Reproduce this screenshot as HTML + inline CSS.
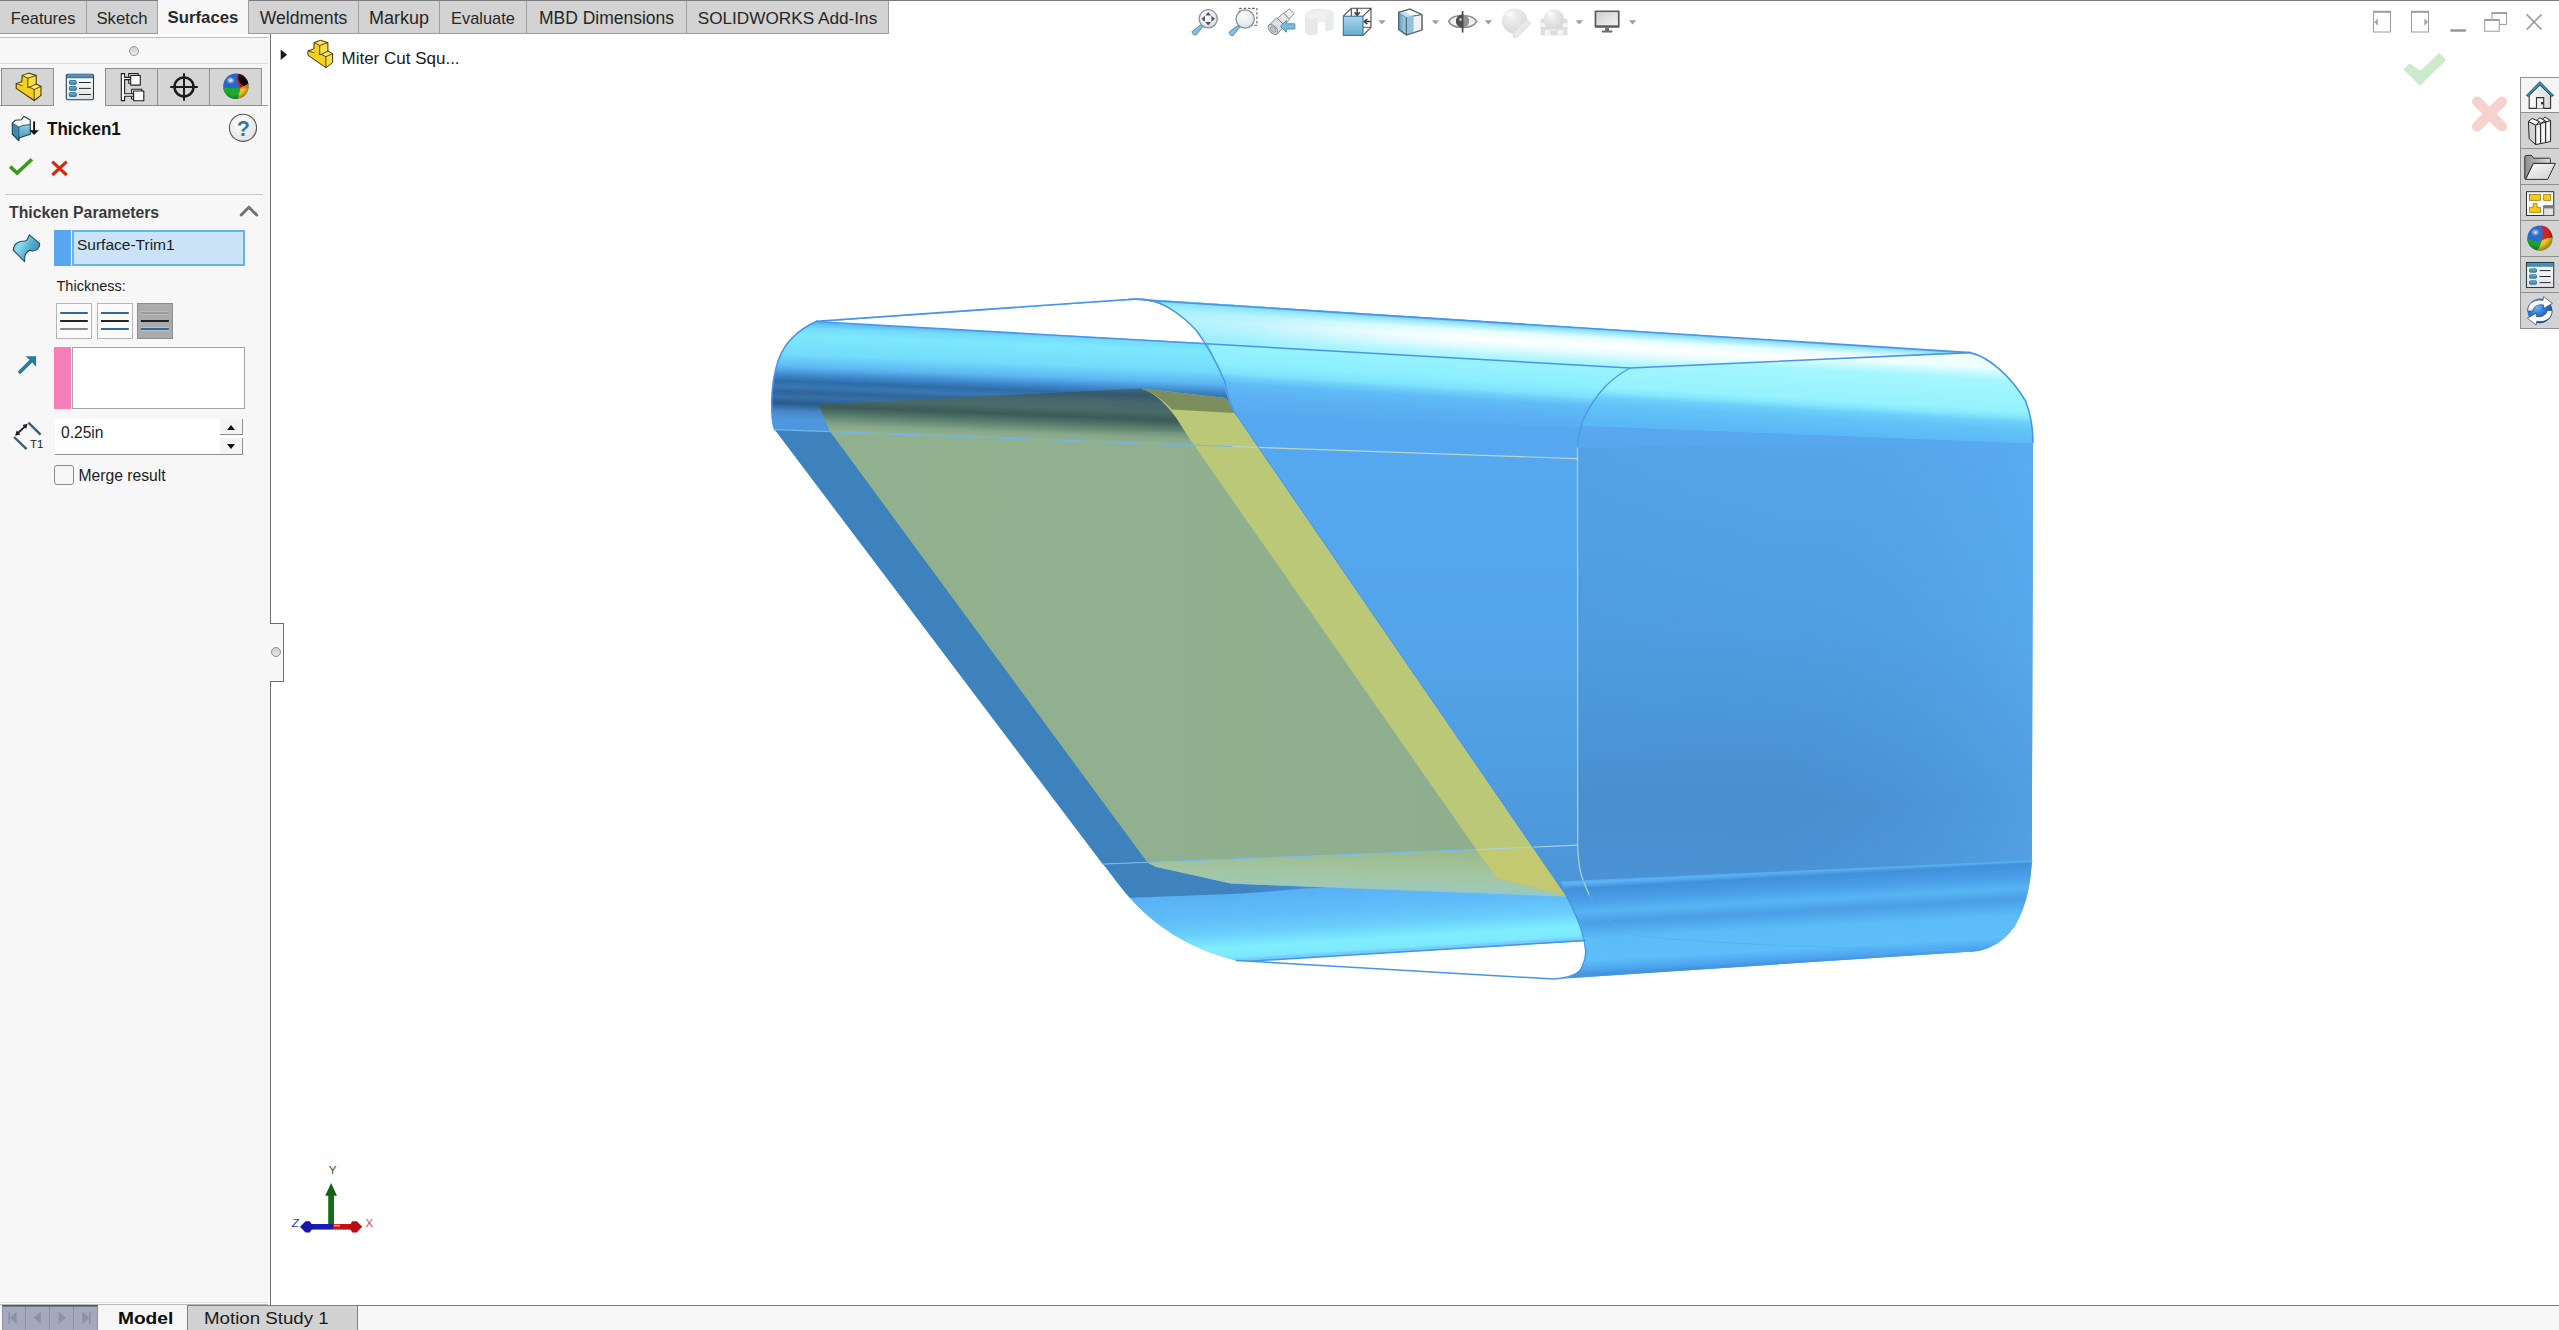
<!DOCTYPE html>
<html>
<head>
<meta charset="utf-8">
<title>SOLIDWORKS - Thicken1</title>
<style>
html,body{margin:0;padding:0;}
body{width:2559px;height:1330px;overflow:hidden;background:#fff;font-family:"Liberation Sans",sans-serif;color:#1e1e1e;position:relative;}
.abs{position:absolute;}
.t{position:absolute;white-space:pre;line-height:1;}
/* top tab strip */
#tabs{position:absolute;left:0;top:1px;height:32px;width:889px;background:#d3d3d3;border-bottom:1px solid #9b9b9b;}
#tabs .tab{position:absolute;top:0;height:32px;border-right:1px solid #9f9f9f;text-align:center;line-height:35px;color:#262626;box-sizing:border-box;}
#tabs .tab.act{background:#f7f7f7;height:34px;font-weight:bold;color:#2a2a2a;}
/* left panel */
#panel{position:absolute;left:0;top:34px;width:270px;height:1271px;background:#f7f7f7;border-right:1px solid #707070;box-sizing:content-box;}
.itab{position:absolute;top:68px;height:38px;width:53px;background:#d5d5d5;border:1px solid #8e8e8e;box-sizing:border-box;}
.itab.act{background:#f7f7f7;border-color:#f7f7f7;height:38px;left:54px;width:51px;}
/* bottom bar */
#bbar{position:absolute;left:0;top:1306px;width:2559px;height:24px;background:#f6f6f6;}
</style>
</head>
<body>
<!-- top dark line -->
<div class="abs" style="left:0;top:0;width:2559px;height:1px;background:#7b7b7b;"></div>

<!-- command manager tabs -->
<div id="tabs">
  <div class="tab" style="left:0;width:87px;font-size:16.4px;">Features</div>
  <div class="tab" style="left:87px;width:71px;font-size:16.7px;">Sketch</div>
  <div class="tab act" style="left:158px;width:91px;font-size:16.8px;top:-1px;">Surfaces</div>
  <div class="tab" style="left:249px;width:110px;font-size:17.6px;">Weldments</div>
  <div class="tab" style="left:359px;width:81px;font-size:18px;">Markup</div>
  <div class="tab" style="left:440px;width:87px;font-size:16.4px;">Evaluate</div>
  <div class="tab" style="left:527px;width:160px;font-size:17.5px;">MBD Dimensions</div>
  <div class="tab" style="left:687px;width:202px;font-size:17.2px;">SOLIDWORKS Add-Ins</div>
</div>

<!-- left property manager panel -->
<div id="panel"></div>
<div class="abs" style="left:0;top:34px;width:268px;height:3px;background:#fdfdfd;"></div>
<div class="abs" style="left:0;top:37px;width:268px;height:1px;background:#bdbdbd;"></div>
<div class="abs" style="left:0;top:63px;width:268px;height:1px;background:#dcdcdc;"></div>
<div class="abs" style="left:129px;top:46px;width:10px;height:10px;border-radius:50%;background:linear-gradient(#d0d0d0,#e8e8e8);border:1px solid #9a9a9a;box-sizing:border-box;"></div>

<!-- panel icon tabs -->
<div class="abs" style="left:0;top:105px;width:268px;height:1px;background:#9a9a9a;"></div>
<div class="itab" style="left:1px;"></div>
<div class="itab act" style="left:54px;"></div>
<div class="itab" style="left:105px;"></div>
<div class="itab" style="left:157px;"></div>
<div class="itab" style="left:209px;width:53px;"></div>

<!-- Thicken1 header -->
<div class="t" style="left:46.8px;top:119.6px;font-size:18px;font-weight:bold;color:#111;transform:scaleX(0.945);transform-origin:left;">Thicken1</div>

<!-- section line -->
<div class="abs" style="left:5px;top:194px;width:258px;height:1px;background:#c9c9c9;"></div>
<div class="t" style="left:9px;top:205px;font-size:15.8px;font-weight:bold;color:#3a3a3a;">Thicken Parameters</div>

<!-- selection box -->
<div class="abs" style="left:54px;top:230px;width:17px;height:36px;background:#58a6f0;"></div>
<div class="abs" style="left:72px;top:230px;width:173px;height:36px;background:#cbe3f7;border:2px solid #66b4ee;box-sizing:border-box;"></div>
<div class="t" style="left:77px;top:236.5px;font-size:15.5px;color:#1c1c1c;">Surface-Trim1</div>

<div class="t" style="left:56.5px;top:279px;font-size:14.5px;color:#1c1c1c;">Thickness:</div>

<!-- three buttons -->
<div class="abs" style="left:56px;top:303px;width:36px;height:36px;background:#fafafa;border:1px solid #b5b5b5;box-sizing:border-box;"></div>
<div class="abs" style="left:97px;top:303px;width:36px;height:36px;background:#fafafa;border:1px solid #b5b5b5;box-sizing:border-box;"></div>
<div class="abs" style="left:137px;top:303px;width:36px;height:36px;background:#ababab;border:1px solid #8d8d8d;box-sizing:border-box;"></div>

<!-- direction box -->
<div class="abs" style="left:54px;top:347px;width:17px;height:62px;background:#f77db9;"></div>
<div class="abs" style="left:72px;top:347px;width:173px;height:62px;background:#fff;border:1px solid #a5a5a5;box-sizing:border-box;"></div>

<!-- thickness input -->
<div class="abs" style="left:55px;top:419px;width:188px;height:35px;background:#fff;border-bottom:1px solid #8f8f8f;"></div>
<div class="t" style="left:61px;top:424.5px;font-size:15.6px;color:#1c1c1c;">0.25in</div>
<div class="abs" style="left:220px;top:419px;width:23px;height:16px;background:#f4f4f4;border-right:1px solid #8f8f8f;border-bottom:1px solid #8f8f8f;box-sizing:border-box;"></div>
<div class="abs" style="left:220px;top:438px;width:23px;height:17px;background:#f4f4f4;border-right:1px solid #8f8f8f;border-bottom:1px solid #8f8f8f;box-sizing:border-box;"></div>
<div class="abs" style="left:227px;top:425px;width:0;height:0;border-left:4px solid transparent;border-right:4px solid transparent;border-bottom:5px solid #111;"></div>
<div class="abs" style="left:227px;top:444px;width:0;height:0;border-left:4px solid transparent;border-right:4px solid transparent;border-top:5px solid #111;"></div>

<!-- checkbox -->
<div class="abs" style="left:54px;top:465px;width:20px;height:20px;background:#f6f6f6;border:1px solid #8a8a8a;border-radius:3px;box-sizing:border-box;"></div>
<div class="t" style="left:78.5px;top:467.5px;font-size:15.7px;color:#1c1c1c;">Merge result</div>

<!-- splitter handle -->
<div class="abs" id="split" style="left:270px;top:623px;width:14px;height:59px;background:#f7f7f7;border:1px solid #6e6e6e;border-left:none;box-sizing:border-box;"></div>
<div class="abs" style="left:271px;top:647px;width:10px;height:10px;border-radius:50%;background:linear-gradient(#cfcfcf,#e6e6e6);border:1px solid #8c8c8c;box-sizing:border-box;"></div>

<!-- bottom bar -->
<div class="abs" style="left:0;top:1302px;width:268px;height:1px;background:#e3e3e3;"></div>
<div class="abs" style="left:0;top:1304px;width:268px;height:1px;background:#b9b9b9;"></div>
<div class="abs" style="left:268px;top:1305px;width:2291px;height:1px;background:#7e7e7e;"></div>
<div id="bbar"></div>

<div class="abs" id="mtab" style="left:98px;top:1305px;width:89px;height:25px;background:#f6f6f6;"></div>
<div class="t" style="left:118px;top:1309.5px;font-size:17.4px;font-weight:bold;color:#0c0c0c;transform:scaleX(1.1);transform-origin:left;">Model</div>
<div class="abs" style="left:187px;top:1305px;width:171px;height:25px;background:#d2d2d2;border:1px solid #7e7e7e;border-bottom:none;box-sizing:border-box;"></div>
<div class="t" style="left:204px;top:1309.5px;font-size:17.4px;color:#1a1a1a;transform:scaleX(1.075);transform-origin:left;">Motion Study 1</div>
<div class="t" style="left:341.5px;top:49.5px;font-size:17px;color:#1a1a1a;">Miter Cut Squ...</div>
<!--ICONS-->
<!--ICONS3-START-->
<svg class="abs" style="left:0;top:0;" width="2559" height="1330" viewBox="0 0 2559 1330">
<defs>
  <g id="partico">
    <path d="M0,10.5 L5.5,8.6 L5.9,2.3 L12.2,0 L19.6,2.3 L19.6,10.9 L24.3,13.3 L24.3,22.3 L17.6,27.4 L0,15.2 Z" fill="#f3cf1f"/>
    <path d="M5.9,2.3 L12.2,0 L19.6,2.3 L11.4,5.1 Z" fill="#fbe874"/>
    <path d="M11.4,5.1 L19.6,2.3 L19.6,10.9 L13,14.1 L11.4,14.3 Z" fill="#f8dc48"/>
    <path d="M19.6,10.9 L24.3,13.3 L17.6,16.4 L13,14.1 Z" fill="#fbe874"/>
    <path d="M17.6,16.4 L24.3,13.3 L24.3,22.3 L17.6,27.4 Z" fill="#f8dc48"/>
    <path d="M0,10.5 L5.5,8.6 L5.7,12.3 Z" fill="#fbe874"/>
    <g fill="none" stroke="#3d3200" stroke-width="1" stroke-linejoin="round" stroke-linecap="round">
      <path d="M0,10.5 L5.5,8.6 L5.9,2.3 L12.2,0 L19.6,2.3 L19.6,10.9 L24.3,13.3 L24.3,22.3 L17.6,27.4 L0,15.2 Z"/>
      <path d="M5.9,2.3 L11.4,5.1 L19.6,2.3 M11.4,5.1 V14.3 M0,10.5 L5.7,12.4 M11.4,14.3 L13,14.1 L17.6,16.4 L24.3,13.3 M13,14.1 L19.6,10.9 M17.6,16.4 V27.4" stroke-width="0.85"/>
    </g>
  </g>
  <linearGradient id="p_listbg" x1="0" y1="0" x2="0" y2="1"><stop offset="0" stop-color="#ffffff"/><stop offset="1" stop-color="#dfe3e5"/></linearGradient>
  <linearGradient id="p_teal" x1="0" y1="0" x2="0" y2="1"><stop offset="0" stop-color="#74bcd8"/><stop offset="1" stop-color="#2f85aa"/></linearGradient>
  <linearGradient id="p_hdr" x1="0" y1="0" x2="0" y2="1"><stop offset="0" stop-color="#5aa2cb"/><stop offset="1" stop-color="#2f76a4"/></linearGradient>
  <linearGradient id="p_thk" x1="0" y1="0" x2="0" y2="1"><stop offset="0" stop-color="#8fcbe6"/><stop offset="1" stop-color="#3f8fb9"/></linearGradient>
  <linearGradient id="p_surf" x1="0" y1="0" x2="1" y2="0.6"><stop offset="0" stop-color="#4da6c6"/><stop offset="0.35" stop-color="#8edcf2"/><stop offset="0.7" stop-color="#4fa6c6"/><stop offset="1" stop-color="#3d90b0"/></linearGradient>
  <radialGradient id="p_help" cx="0.4" cy="0.35" r="0.8"><stop offset="0" stop-color="#ffffff"/><stop offset="1" stop-color="#dcdcdc"/></radialGradient>
  <clipPath id="cs2"><circle cx="235.9" cy="86.3" r="12.7"/></clipPath>
  <radialGradient id="p_gloss" cx="0.5" cy="0.5" r="0.5"><stop offset="0" stop-color="#fff" stop-opacity="0.95"/><stop offset="1" stop-color="#fff" stop-opacity="0"/></radialGradient>
  <radialGradient id="p_shade" cx="0.42" cy="0.38" r="0.72"><stop offset="0.65" stop-color="#000" stop-opacity="0"/><stop offset="1" stop-color="#000" stop-opacity="0.5"/></radialGradient>
</defs>

<!-- panel tab 1: part icon -->
<use href="#partico" transform="translate(16.2,73.1) scale(1.02,1)"/>
<!-- panel tab 2: property list -->
<g>
  <rect x="66.3" y="74.2" width="27.2" height="25.6" rx="1.6" fill="url(#p_listbg)" stroke="#1f3f55" stroke-width="1.1"/>
  <path d="M66.9,78.2 V75.8 Q66.9,74.8 67.9,74.8 H91.9 Q92.9,74.8 92.9,75.8 V78.2 Z" fill="url(#p_hdr)"/>
  <g fill="url(#p_teal)" stroke="#1d5f80" stroke-width="0.8"><rect x="69.3" y="80.5" width="7" height="3.8" rx="1"/><rect x="69.3" y="86.5" width="7" height="3.8" rx="1"/><rect x="69.3" y="92.6" width="7" height="3.8" rx="1"/></g>
  <path d="M79,82.5 h11.8 M79,88.4 h11.8 M79,94.5 h11.8" stroke="#2b2b2b" stroke-width="1"/>
</g>
<!-- panel tab 3: configuration tree -->
<g stroke="#1e1e1e" stroke-width="1.1" fill="#fdfdfd" stroke-linejoin="round">
  <rect x="128.7" y="73.6" width="9.6" height="9.6"/>
  <rect x="131.6" y="89.2" width="10.2" height="9.8"/>
  <path d="M121.3,73.6 H124.6 V77.4 H130.6 V79.6 H124.6 V93.8 H133.4 V96.2 H124.6 V100.6 H121.3 Z"/>
  <rect x="130.7" y="75.5" width="9.6" height="9.6"/>
  <rect x="133.6" y="91" width="10.2" height="9.8"/>
</g>
<!-- panel tab 4: crosshair -->
<g fill="none" stroke="#1c1c1c">
  <circle cx="184" cy="86.9" r="9.5" stroke-width="2.5"/>
  <path d="M170.2,86.9 H197.8 M184,73.2 V100.8" stroke-width="2"/>
</g>
<!-- panel tab 5: appearance sphere -->
<g clip-path="url(#cs2)">
  <rect x="223" y="73" width="26" height="27" fill="#2a66c4"/>
  <path d="M238,73 C236.5,78 237.5,83.5 240.5,88 C244,86.5 247,85 249,83 L249,73 Z" fill="#c01818"/>
  <ellipse cx="243.6" cy="80" rx="4.4" ry="7.4" transform="rotate(-28 243.6 80)" fill="#0c0202"/>
  <path d="M223,87.6 C229,88.4 234.5,88.6 240.5,88 C239.5,92 238.5,96 237.6,100 L223,100 Z" fill="#1ea82c"/>
  <path d="M240.5,88 C244,86.5 247,85 249,83 L249,100 L237.6,100 C238.5,96 239.5,92 240.5,88 Z" fill="#eec222"/>
  <path d="M240.5,88 C243.5,89 246.5,88.6 249,87.4 L249,83 C247,85 244,86.5 240.5,88Z" fill="#e07a18" opacity="0.8"/>
  <circle cx="235.9" cy="86.3" r="12.7" fill="url(#p_shade)"/>
  <ellipse cx="230.6" cy="80.4" rx="4.4" ry="3.6" fill="url(#p_gloss)"/>
</g>

<!-- Thicken feature icon -->
<g stroke-linejoin="round">
  <path d="M12.3,123.1 L18.9,127.1 L18.6,140.6 L12.3,134 Z" fill="#3f8ab3"/>
  <path d="M18.9,127.1 L22.9,125.4 L30.3,124.6 L30.3,134.3 L19.7,137.7 L18.6,140.6 Z" fill="url(#p_thk)"/>
  <path d="M12.3,123.1 L15.1,120.3 L21.4,119.7 L23.7,116.3 L30.3,120 L30.3,124.6 L22.9,125.4 L18.9,127.1 Z" fill="#f4f6f7"/>
  <path d="M12.3,123.1 L15.1,120.3 L21.4,119.7 L23.7,116.3 L30.3,120 L30.3,134.3 L19.7,137.7 L18.6,140.6 L12.3,134 Z" fill="none" stroke="#1d3f52" stroke-width="1.1"/>
  <path d="M12.3,123.1 L18.9,127.1 L22.9,125.4 L30.3,124.6 M18.9,127.1 L18.6,140.6" fill="none" stroke="#1d4a62" stroke-width="0.9"/>
  <path d="M34.1,121.4 V132" stroke="#111" stroke-width="1.9" fill="none"/>
  <path d="M29.5,130.2 H38.8 L34.1,135 Z" fill="#111"/>
</g>
<!-- help -->
<circle cx="243" cy="127.8" r="13.6" fill="url(#p_help)" stroke="#5a5a5a" stroke-width="1.1"/>
<text x="243.4" y="135.6" text-anchor="middle" font-family="Liberation Sans, sans-serif" font-weight="bold" font-size="21.5" fill="#2e7ba1">?</text>
<!-- ok / cancel -->
<path d="M10.2,166.6 L17.1,173 L31.9,159.3" fill="none" stroke="#3a9a1b" stroke-width="3.6" stroke-linejoin="miter"/>
<path d="M52.3,161.6 L66.7,175 M66.7,161.6 L52.3,175" fill="none" stroke="#d9290d" stroke-width="3.2"/>
<!-- chevron -->
<path d="M241.2,215 L248.9,207.2 L256.7,215" fill="none" stroke="#727272" stroke-width="3" stroke-linecap="round" stroke-linejoin="round"/>

<!-- surface icon -->
<path d="M13.2,250 C13.6,246 16,243 19,242 C22,241 25,241.6 26.6,240.4 C28,239 28.4,236.6 29.3,234.8 L39.5,243.4 C40.2,246 39,248 37,249.6 C35,251 32.4,251.4 29.7,250.2 C27,251.6 25.2,254 24.8,256.4 L24.6,261.7 Z" fill="url(#p_surf)" stroke="#1f4f60" stroke-width="1.1" stroke-linejoin="round"/>

<!-- thickness buttons lines -->
<g stroke-width="2" fill="none">
  <path d="M60.2,313 H87.8" stroke="#2a6c9a"/><path d="M60.2,321 H87.8" stroke="#222"/><path d="M60.2,329 H87.8" stroke="#8c8c8c"/>
  <path d="M101,313 H128.8" stroke="#2a6c9a"/><path d="M101,321 H128.8" stroke="#222"/><path d="M101,329 H128.8" stroke="#2a6c9a"/>
  <path d="M140.9,313 H168.9" stroke="#c6c6c6" stroke-width="3.2"/><path d="M140.9,313 H168.9" stroke="#8e8e8e" stroke-width="1.6"/>
  <path d="M140.9,321 H168.9" stroke="#222"/>
  <path d="M140.9,329 H168.9" stroke="#b8d2dc" stroke-width="3.2"/><path d="M140.9,329 H168.9" stroke="#2a6c9a"/>
</g>

<!-- direction arrow -->
<path d="M20.2,374.2 L17.7,371.7 L29.6,359.8 L25.3,356.2 L36.1,356.2 L36.1,367.1 L32.2,362.4 Z" fill="#2a7a9e"/>
<!-- T1 icon -->
<g fill="none">
  <path d="M28.4,422.6 L40.6,434.7 M14,437 L26.6,449.2" stroke="#3a5f7a" stroke-width="2.4"/>
  <path d="M17,434 L25.8,425.6" stroke="#222" stroke-width="1.8"/>
  <path d="M15.2,435.8 L16.6,430.6 L20.4,434.6 Z M27.6,423.8 L26.2,429 L22.4,425 Z" fill="#222"/>
</g>
<text x="30" y="447.8" font-family="Liberation Sans, sans-serif" font-size="11.5" fill="#222">T1</text>

<!-- breadcrumb -->
<path d="M280.7,49.6 L287.1,54.8 L280.7,60 Z" fill="#1a1a1a"/>
<use href="#partico" transform="translate(308.3,40.3)"/>

<!-- triad -->
<g>
  <rect x="328.2" y="1194" width="5.8" height="31" fill="#176d17"/>
  <path d="M331.1,1183 L337,1195.8 H325.2 Z" fill="#156215"/>
  <rect x="306" y="1224" width="27" height="5.6" fill="#1a1ab4"/>
  <path d="M300,1226.8 L305.5,1221.2 H309.8 L313.4,1226.8 L309.8,1232.6 H305.5 Z" fill="#1717a8"/>
  <rect x="332.8" y="1224" width="22" height="5.6" fill="#c81212"/>
  <path d="M362.2,1226.8 L356.8,1221.2 H352.4 L348.6,1226.8 L352.4,1232.6 H356.8 Z" fill="#b80e0e"/>
  <rect x="334" y="1224.8" width="6" height="1.6" fill="#f6b0b0" opacity="0.9"/>
</g>
<text x="328.8" y="1173.6" font-family="Liberation Sans, sans-serif" font-size="11.5" fill="#1f5a1f">Y</text>
<text x="291.8" y="1226.9" font-family="Liberation Sans, sans-serif" font-size="11.5" font-style="italic" fill="#3232c4">Z</text>
<text x="365.6" y="1226.9" font-family="Liberation Sans, sans-serif" font-size="11.5" fill="#d04848">X</text>

<!-- bottom nav buttons -->
<g>
  <rect x="2" y="1305" width="96" height="25" fill="#a4a9bb"/>
  <rect x="2" y="1305" width="96" height="1.6" fill="#55565e"/>
  <path d="M25.5,1307 V1330 M49.5,1307 V1330 M73.5,1307 V1330 M2.5,1306 V1330 M97.5,1306 V1330" stroke="#8b90a4" stroke-width="1"/>
  <g fill="#8b91a8">
    <path d="M16.6,1311.6 V1324 L9.8,1317.8 Z"/><rect x="8.4" y="1311.6" width="1.6" height="12.4"/>
    <path d="M40.8,1311.6 V1324 L33.6,1317.8 Z"/>
    <path d="M58.6,1311.6 V1324 L65.8,1317.8 Z"/>
    <path d="M82.4,1311.6 V1324 L89.2,1317.8 Z"/><rect x="89" y="1311.6" width="1.6" height="12.4"/>
  </g>
</g>
</svg>
<!--ICONS3-END-->
<!--ICONS2-START-->
<svg class="abs" style="left:0;top:0;" width="2559" height="1330" viewBox="0 0 2559 1330">
<defs>
  <linearGradient id="wallg" x1="0" y1="0" x2="1" y2="0"><stop offset="0" stop-color="#fdfdfd"/><stop offset="1" stop-color="#d9d9d9"/></linearGradient>
  <linearGradient id="bookg" x1="0" y1="0" x2="1" y2="0"><stop offset="0" stop-color="#cfcfcf"/><stop offset="0.5" stop-color="#ffffff"/><stop offset="1" stop-color="#e4e4e4"/></linearGradient>
  <linearGradient id="foldg" x1="0" y1="0" x2="1" y2="1"><stop offset="0" stop-color="#fdfdfd"/><stop offset="1" stop-color="#cfcfcf"/></linearGradient>
  <linearGradient id="foldb" x1="0" y1="0" x2="1" y2="0"><stop offset="0" stop-color="#8e8e8e"/><stop offset="1" stop-color="#dcdcdc"/></linearGradient>
  <radialGradient id="gloss" cx="0.5" cy="0.5" r="0.5"><stop offset="0" stop-color="#fff" stop-opacity="0.9"/><stop offset="0.5" stop-color="#fff" stop-opacity="0.35"/><stop offset="1" stop-color="#fff" stop-opacity="0"/></radialGradient>
  <radialGradient id="shade" cx="0.42" cy="0.38" r="0.72"><stop offset="0.55" stop-color="#000" stop-opacity="0"/><stop offset="1" stop-color="#000" stop-opacity="0.5"/></radialGradient>
  <radialGradient id="bsph" cx="0.35" cy="0.3" r="0.8"><stop offset="0" stop-color="#7cc4f8"/><stop offset="0.45" stop-color="#2a7ad8"/><stop offset="1" stop-color="#123a90"/></radialGradient>
  <linearGradient id="tealb" x1="0" y1="0" x2="0" y2="1"><stop offset="0" stop-color="#6cb6d4"/><stop offset="1" stop-color="#2f85aa"/></linearGradient>
  <linearGradient id="listbg" x1="0" y1="0" x2="0" y2="1"><stop offset="0" stop-color="#ffffff"/><stop offset="1" stop-color="#dfe3e5"/></linearGradient>
  <clipPath id="cs1"><circle cx="2539.9" cy="238.2" r="12.6"/></clipPath>
</defs>
<!-- window controls -->
<g fill="none" stroke="#9b9b9b" stroke-width="1">
  <rect x="2373.5" y="12" width="17" height="20"/><path d="M2373,11.7 h18" stroke-width="1.8"/>
  <rect x="2411.5" y="12" width="17" height="20"/><path d="M2411,11.7 h18" stroke-width="1.8"/>
  <path d="M2450.3,30.5 h15.6" stroke-width="2.6"/>
  <rect x="2491.9" y="13.4" width="14.6" height="11"/><path d="M2491.4,13 h15.6" stroke-width="1.8"/>
  <rect x="2484.7" y="20.2" width="14.6" height="11" fill="#fff"/><path d="M2484.2,19.9 h15.6" stroke-width="1.8"/>
  <path d="M2526.6,14.4 L2541.6,29.6 M2541.6,14.4 L2526.6,29.6" stroke-width="1.5"/>
</g>
<path d="M2374.2,22.1 l3.6,-3.6 v7.2z M2428,22.1 l-3.6,-3.6 v7.2z" fill="#a0a0a0"/>
<!-- confirm corner -->
<path d="M2403.4,69.6 L2409.6,63.3 L2420.2,70.7 L2439.2,53.1 L2446.2,60 L2420,85.8 Z" fill="#cdeaca"/>
<g stroke="#f6d2ce" stroke-width="10.4" stroke-linecap="round"><path d="M2477.2,101.6 L2501.8,126.4 M2501.8,101.6 L2477.2,126.4"/></g>

<!-- task pane -->
<rect x="2520.5" y="77.5" width="39" height="251" fill="#d3d3d3" stroke="#8e8e8e" stroke-width="1"/>
<rect x="2521" y="78" width="38" height="34" fill="#f5f5f5"/>
<g stroke="#8e8e8e" stroke-width="1"><path d="M2520,112.5 h39 M2520,148.5 h39 M2520,184.5 h39 M2520,220.5 h39 M2520,256.5 h39 M2520,292.5 h39"/></g>
<!-- home -->
<g>
  <path d="M2529.2,95 V108.4 H2550.6 V95 L2539.9,84.5 Z" fill="url(#wallg)" stroke="#333" stroke-width="1.1"/>
  <path d="M2536.5,108.4 V97.6 H2543.7 V108.4" fill="#efefef" stroke="#333" stroke-width="1.1"/>
  <path d="M2541,102 h2.2 v2.4 h-2.2z" fill="#333"/>
  <path d="M2526.4,95.4 L2539.9,81.6 L2553.6,95.4 L2551.8,96.4 L2539.9,85.2 L2528.2,96.4 Z" fill="#3a8eae" stroke="#1d4f63" stroke-width="0.9" stroke-linejoin="round"/>
</g>
<!-- books -->
<g stroke="#2a2a2a" stroke-width="1" stroke-linejoin="round">
  <path d="M2528.4,121.4 L2535.6,125.2 L2535.6,144.6 L2529.2,138.8 Z" fill="#d4d4d4"/>
  <path d="M2528.4,121.4 L2532.2,118.4 L2539.4,121.6 L2535.6,125.2 Z" fill="#f4f4f4"/>
  <path d="M2535.6,125.2 L2540.6,123.6 L2540.6,143.6 L2535.6,144.6 Z" fill="url(#bookg)"/>
  <path d="M2536.8,120.4 L2539.8,117.8 L2545.2,120.6 L2540.6,123.6 L2539.4,121.6 Z" fill="#f4f4f4"/>
  <path d="M2540.6,123.6 L2545.6,122.2 L2545.6,142.6 L2540.6,143.6 Z" fill="url(#bookg)"/>
  <path d="M2542.4,119.2 L2545,117 L2550.6,120.6 L2545.6,122.2 L2545.2,120.6 Z" fill="#f4f4f4"/>
  <path d="M2545.6,122.2 L2550.6,120.6 L2550.6,141.4 L2545.6,142.6 Z" fill="url(#bookg)"/>
</g>
<!-- folder -->
<g stroke="#2e2e2e" stroke-width="1" stroke-linejoin="round">
  <path d="M2524.8,178.4 V157 Q2524.8,155.4 2526.4,155.4 H2531.6 L2533.6,158.2 H2549.4 Q2550.4,158.2 2550.4,159.4 V163.4 H2533.4 L2525.6,179.4 Z" fill="url(#foldb)"/>
  <path d="M2525.6,179.4 L2533.4,163.4 H2555.4 L2547.6,179.4 Z" fill="url(#foldg)"/>
</g>
<!-- view palette -->
<g>
  <rect x="2526.5" y="191.7" width="27.2" height="23.8" fill="#fff" stroke="#2e2e2e" stroke-width="1"/>
  <rect x="2529.5" y="194.5" width="11" height="5.8" fill="#f6cc12" stroke="#8a6a00" stroke-width="0.7"/>
  <rect x="2543.7" y="194.5" width="7" height="5.8" fill="#f6cc12" stroke="#8a6a00" stroke-width="0.7"/>
  <path d="M2533.2,203.6 h3.8 v3.8 h3.5 v5 h-11 v-5 h3.7z" fill="#f6cc12" stroke="#8a6a00" stroke-width="0.7"/>
  <rect x="2543.7" y="205.8" width="10" height="9.7" fill="#e2e2e2" stroke="#4a4a4a" stroke-width="0.8"/>
  <rect x="2543.7" y="205.8" width="10" height="2.6" fill="#7a7a7a"/>
</g>
<!-- appearance sphere -->
<g>
  <g clip-path="url(#cs1)">
    <rect x="2527" y="225" width="26" height="26" fill="#2c6cc9"/>
    <path d="M2541.5,225 C2543,231 2543.4,236 2541.8,240.6 C2546,238 2550,237.4 2553,238 L2553,225 Z" fill="#d62222"/>
    <path d="M2527,238.4 C2532,240.8 2537,241.6 2541.8,240.6 C2540.8,244.6 2539,248.4 2536,252 L2527,252 Z" fill="#1da32c"/>
    <path d="M2541.8,240.6 C2546,238 2550,237.4 2553,238 L2553,252 L2536,252 C2539,248.4 2540.8,244.6 2541.8,240.6 Z" fill="#ecc524"/>
    <circle cx="2539.9" cy="238.2" r="12.6" fill="url(#shade)"/>
    <ellipse cx="2535.4" cy="232.4" rx="4.6" ry="3.8" fill="url(#gloss)"/>
  </g>
</g>
<!-- custom props list -->
<g>
  <rect x="2526.5" y="262.5" width="27.2" height="25" fill="url(#listbg)" stroke="#2d3d48" stroke-width="1.1"/>
  <rect x="2527" y="263" width="26.2" height="3.8" fill="#3f8fb8"/>
  <g fill="url(#tealb)" stroke="#1f6486" stroke-width="0.7"><rect x="2529.5" y="268.8" width="7" height="3.5" rx="0.8"/><rect x="2529.5" y="274.7" width="7" height="3.5" rx="0.8"/><rect x="2529.5" y="280.8" width="7" height="3.5" rx="0.8"/></g>
  <path d="M2539.6,270.6 h11 M2539.6,276.5 h11 M2539.6,282.6 h11" stroke="#2a2a2a" stroke-width="1"/>
</g>
<!-- refresh sphere -->
<g>
  <circle cx="2539.9" cy="310.8" r="12.4" fill="url(#bsph)"/>
  <path d="M2527.6,311 C2527.6,303 2535,298.6 2543,300.4 L2543.6,296.6 L2552.4,303.4 L2543.4,308.6 L2543.6,305 C2538,304 2533.6,306.4 2532.6,311 Z" fill="#fff" stroke="#26425e" stroke-width="0.7" stroke-linejoin="round"/>
  <path d="M2552.2,310.6 C2552.2,318.6 2544.8,323 2536.8,321.2 L2536.2,325 L2527.4,318.2 L2536.4,313 L2536.2,316.6 C2541.8,317.6 2546.2,315.2 2547.2,310.6 Z" fill="#fff" stroke="#26425e" stroke-width="0.7" stroke-linejoin="round"/>
</g>
</svg>
<!--ICONS2-END-->
<!--ICONS1-START-->
<svg class="abs" style="left:0;top:0;" width="2559" height="1330" viewBox="0 0 2559 1330">
<defs>
  <radialGradient id="lens" cx="0.4" cy="0.35" r="0.7"><stop offset="0" stop-color="#fafcfd"/><stop offset="0.7" stop-color="#e4ebef"/><stop offset="1" stop-color="#cfd8dd"/></radialGradient>
  <linearGradient id="bluef" x1="0" y1="0" x2="0" y2="1"><stop offset="0" stop-color="#a8d8ee"/><stop offset="1" stop-color="#6aa9cf"/></linearGradient>
  <linearGradient id="bluel" x1="0" y1="0" x2="1" y2="0"><stop offset="0" stop-color="#5a9cc6"/><stop offset="1" stop-color="#a8d6ec"/></linearGradient>
  <radialGradient id="gsph" cx="0.38" cy="0.3" r="0.75"><stop offset="0" stop-color="#f4f4f4"/><stop offset="0.6" stop-color="#e2e2e2"/><stop offset="1" stop-color="#d4d4d4"/></radialGradient>
  <linearGradient id="scr" x1="0" y1="0" x2="1" y2="1"><stop offset="0" stop-color="#cfcfcf"/><stop offset="1" stop-color="#f2f2f2"/></linearGradient>
</defs>
<!-- 1 zoom to fit -->
<g>
  <path d="M1203.1,26.2 L1196.2,34.8 Q1193.4,35.6 1192.4,33 Q1191.8,31.4 1192.6,31 L1201.5,24.4 Z" fill="#86bfe2" stroke="#4f86ab" stroke-width="1" stroke-linejoin="round"/>
  <circle cx="1208.2" cy="18.8" r="9.1" fill="url(#lens)" stroke="#8a8f92" stroke-width="1.3"/>
  <path d="M1208.2,12 l3,3.6 h-6 z M1208.2,25.6 l3,-3.6 h-6 z M1201.4,18.8 l3.6,-3 v6 z M1215,18.8 l-3.6,-3 v6 z" fill="#555"/>
</g>
<!-- 2 zoom to area -->
<g>
  <rect x="1239.3" y="8.3" width="17.6" height="17" fill="none" stroke="#4a4a4a" stroke-width="1" stroke-dasharray="2.6,1.7"/>
  <path d="M1240.1,26.8 L1233.2,35.4 Q1230.4,36.2 1229.4,33.6 Q1228.8,32 1229.6,31.6 L1238.5,25 Z" fill="#86bfe2" stroke="#4f86ab" stroke-width="1" stroke-linejoin="round"/>
  <circle cx="1245.2" cy="19" r="9.1" fill="url(#lens)" stroke="#8a8f92" stroke-width="1.3"/>
</g>
<!-- 3 previous view (telescope + arrow) -->
<g stroke-linejoin="round">
  <path d="M1289.2,18.9 L1294,13.6 L1289.2,8.8 L1283.9,13.5 Z" fill="#eef0f1" stroke="#8a8e91" stroke-width="1"/>
  <path d="M1284.2,25.2 L1289.7,19.4 L1283.4,13 L1277.5,18.4 Z" fill="#e4e7e9" stroke="#8a8e91" stroke-width="1"/>
  <path d="M1277.2,33.8 L1284.8,25.8 L1276.9,17.8 L1268.8,25.2 Z" fill="#dfe2e4" stroke="#7f8386" stroke-width="1"/>
  <ellipse cx="1273" cy="29.5" rx="6" ry="3.5" transform="rotate(45.6 1273 29.5)" fill="#d9dcde" stroke="#7f8386" stroke-width="1"/>
  <ellipse cx="1273" cy="29.5" rx="3.6" ry="1.8" transform="rotate(45.6 1273 29.5)" fill="#c6cacd" stroke="#8a8e91" stroke-width="0.8"/>
  <path d="M1280.4,26.4 L1286.3,20.6 L1286.3,23.8 L1294.8,23.8 L1294.8,29 L1286.3,29 L1286.3,32.2 Z" fill="#7fbbdc" stroke="#4f8fb5" stroke-width="1"/>
</g>
<!-- 4 section view disabled -->
<g opacity="0.9">
  <path d="M1305.5,16 C1307,10 1318,8.5 1324,10.5 C1330,9.5 1333,12 1333,14 L1333,29 L1326,31 L1326,22 C1322,19 1318,21 1317,24 L1317,33 C1313,36 1307,35 1305.5,32 Z" fill="#efefef" stroke="#e0e0e0" stroke-width="1"/>
  <path d="M1305.5,16 C1308,20 1314,20 1317,17 L1317,33 C1313,36 1307,35 1305.5,32 Z" fill="#e6e6e6"/>
  <path d="M1326,14 L1333,13.5 L1333,29 L1326,31 Z" fill="#e8e8e8"/>
</g>
<!-- 5 view orientation -->
<g>
  <path d="M1351.3,8.3 H1371 V27.3 L1363,35.4 M1351.3,8.3 L1343.3,16.2 M1371,8.3 L1363,16.2 M1351.3,8.3 V16" fill="none" stroke="#4a4a4a" stroke-width="1.1"/>
  <rect x="1343.3" y="16.2" width="19.7" height="19.2" fill="url(#bluef)" stroke="#3f6f8f" stroke-width="1.1"/>
  <path d="M1357.2,8.6 V15 M1354.6,12.2 L1357.2,15.4 L1359.8,12.2" fill="none" stroke="#3c3c3c" stroke-width="1.5"/>
  <path d="M1370.6,21.6 H1364.4 M1367.4,19 L1364.2,21.6 L1367.4,24.2" fill="none" stroke="#3c3c3c" stroke-width="1.5"/>
  <path d="M1363,27.3 H1371" stroke="#4a4a4a" stroke-width="0.9"/>
</g>
<path d="M1378.4,20.2 h7.2 l-3.6,4.2 z" fill="#9c9c9c"/>
<!-- 6 display style -->
<g>
  <path d="M1398.6,12.4 L1409.8,9 L1422,14.6 L1406.4,17.4 Z" fill="#f6f8f9" stroke="#6a6e70" stroke-width="1" stroke-linejoin="round"/>
  <path d="M1398.6,12.4 L1406.4,17.4 L1406.4,35 L1398.6,29.4 Z" fill="url(#bluel)" stroke="#4a6f86" stroke-width="1.1" stroke-linejoin="round"/>
  <path d="M1406.4,17.4 L1422,14.6 L1422,30 L1406.4,35 Z" fill="#eef0f1" stroke="#6a6e70" stroke-width="1" stroke-linejoin="round"/>
  <path d="M1406.4,17.4 L1413.6,16.1 L1413.6,32.7 L1406.4,35 Z" fill="#8cc4e2"/>
  <path d="M1403.5,10.9 L1410.6,15.6 L1413.6,16.1 L1406.4,17.4 L1398.6,12.4Z" fill="#b4dcee" opacity="0.9"/>
  <path d="M1398.6,12.4 L1409.8,9 L1422,14.6 L1422,30 L1406.4,35 L1398.6,29.4 Z M1406.4,17.4 V35" fill="none" stroke="#5c6468" stroke-width="1.1" stroke-linejoin="round"/>
</g>
<path d="M1431.9,20.2 h7.2 l-3.6,4.2 z" fill="#9c9c9c"/>
<!-- 7 hide/show eye -->
<g>
  <path d="M1448.6,21.3 C1453,13.5 1472,13.5 1476.8,21.3 C1472,29.5 1453,29.5 1448.6,21.3 Z" fill="#f2f2f2" stroke="#8a8a8a" stroke-width="1.6"/>
  <circle cx="1462.6" cy="21.2" r="6.6" fill="#8f8f8f"/>
  <path d="M1462.6,14.6 A6.6,6.6 0 0 0 1462.6,27.8 Z" fill="#4e4e4e"/>
  <circle cx="1460.6" cy="19.6" r="1.5" fill="#bdbdbd"/>
  <path d="M1462.6,11 V32.6" stroke="#4a4a4a" stroke-width="1.7"/>
</g>
<path d="M1484.8,20.2 h7.2 l-3.6,4.2 z" fill="#9c9c9c"/>
<!-- 8 appearance disabled -->
<g>
  <circle cx="1514.6" cy="21" r="12.6" fill="url(#gsph)"/>
  <path d="M1513,33 L1526,19.5 L1531,23 L1518,36.5 L1513.5,37.5 Z" fill="#e9e9e9" stroke="#dcdcdc" stroke-width="1"/>
  <ellipse cx="1509" cy="14" rx="4" ry="2.6" fill="#fafafa" opacity="0.8"/>
</g>
<!-- 9 scene disabled -->
<g>
  <rect x="1540.6" y="18.6" width="27" height="16.8" fill="#dedede"/>
  <path d="M1541,23 h4.5 v4 h-4.5z M1563,23 h4.5 v4 h-4.5z M1544.8,30 h5.4 v5 h-5.4z M1557.8,30 h5.4 v5 h-5.4z M1551,26.6 h5.6 v3.6 h-5.6z" fill="#f5f5f5"/>
  <circle cx="1553.8" cy="19.4" r="10.2" fill="url(#gsph)"/>
  <ellipse cx="1550.4" cy="13.6" rx="3.4" ry="2.2" fill="#fafafa" opacity="0.8"/>
</g>
<path d="M1575.7,20.2 h7.2 l-3.6,4.2 z" fill="#9c9c9c"/>
<!-- 10 monitor -->
<g>
  <rect x="1594.6" y="10.4" width="25" height="17.4" fill="#5a5a5a" rx="0.8"/>
  <rect x="1596.3" y="12.1" width="21.6" height="13.2" fill="url(#scr)"/>
  <rect x="1605.2" y="27.8" width="3.8" height="3.2" fill="#6a6a6a"/>
  <rect x="1601.6" y="30.6" width="11" height="2" fill="#6e6e6e" rx="0.8"/>
</g>
<path d="M1629,20.2 h7.2 l-3.6,4.2 z" fill="#9c9c9c"/>
</svg>
<!--ICONS1-END-->
<!--MODEL-START-->
<svg class="abs" style="left:0;top:0;" width="2559" height="1330" viewBox="0 0 2559 1330">
<defs>
  <!-- right face base -->
  <linearGradient id="gRight" gradientUnits="userSpaceOnUse" x1="1800" y1="430" x2="1800" y2="870">
    <stop offset="0" stop-color="#57a8ee"/><stop offset="0.45" stop-color="#50a0e3"/><stop offset="0.85" stop-color="#488ecd"/><stop offset="1" stop-color="#4a92d3"/>
  </linearGradient>
  <linearGradient id="gRightH" gradientUnits="userSpaceOnUse" x1="1577" y1="0" x2="2033" y2="0">
    <stop offset="0" stop-color="#4a92d6" stop-opacity="0.25"/><stop offset="0.45" stop-color="#4a92d6" stop-opacity="0.12"/><stop offset="1" stop-color="#5cb2f8" stop-opacity="0.45"/>
  </linearGradient>
  <!-- near wall (left face) base -->
  <linearGradient id="gNear" gradientUnits="userSpaceOnUse" x1="1400" y1="420" x2="1400" y2="890">
    <stop offset="0" stop-color="#56a9f0"/><stop offset="0.5" stop-color="#53a4ea"/><stop offset="1" stop-color="#4b95d8"/>
  </linearGradient>
  <!-- far wall top band (blue only) -->
  <linearGradient id="gFarTop" gradientUnits="userSpaceOnUse" x1="957" y1="329" x2="952.8" y2="434">
    <stop offset="0" stop-color="#5cbcf4"/>
    <stop offset="0.05" stop-color="#74dcfb"/>
    <stop offset="0.12" stop-color="#7ce8fd"/>
    <stop offset="0.3" stop-color="#74dcfb"/>
    <stop offset="0.42" stop-color="#5cb8f2"/>
    <stop offset="0.5" stop-color="#3f88cc"/>
    <stop offset="0.56" stop-color="#2e6ca8"/>
    <stop offset="0.61" stop-color="#3a78b4"/>
    <stop offset="0.66" stop-color="#2f6599"/>
    <stop offset="0.71" stop-color="#3670a8"/>
    <stop offset="0.77" stop-color="#2a5a8c"/>
    <stop offset="0.85" stop-color="#4888c8"/>
    <stop offset="0.93" stop-color="#4f97dd"/>
    <stop offset="1" stop-color="#4f97dd"/>
  </linearGradient>
  <!-- green region incl. dark top -->
  <linearGradient id="gGreen" gradientUnits="userSpaceOnUse" x1="957.4" y1="380" x2="955" y2="440">
    <stop offset="0" stop-color="#3f7088"/>
    <stop offset="0.13" stop-color="#36586a"/>
    <stop offset="0.27" stop-color="#47686c"/>
    <stop offset="0.40" stop-color="#4a6b68"/>
    <stop offset="0.53" stop-color="#3c5a58"/>
    <stop offset="0.63" stop-color="#4f7366"/>
    <stop offset="0.73" stop-color="#6a8c78"/>
    <stop offset="0.83" stop-color="#85a688"/>
    <stop offset="0.93" stop-color="#90b08f"/>
    <stop offset="1" stop-color="#90b08f"/>
  </linearGradient>
  <linearGradient id="gGreenH" gradientUnits="userSpaceOnUse" x1="820" y1="0" x2="1500" y2="0">
    <stop offset="0" stop-color="#93b390" stop-opacity="0.5"/><stop offset="1" stop-color="#86a684" stop-opacity="0.6"/>
  </linearGradient>
  <!-- far bottom band (cyan) -->
  <linearGradient id="gFarBot" gradientUnits="userSpaceOnUse" x1="1400" y1="886" x2="1404" y2="952">
    <stop offset="0" stop-color="#5ab2f6"/><stop offset="0.3" stop-color="#60bcf9"/><stop offset="0.55" stop-color="#6acefb"/><stop offset="0.78" stop-color="#80eefe"/><stop offset="0.92" stop-color="#7ce8fe"/><stop offset="1" stop-color="#62c4f8"/>
  </linearGradient>
  <linearGradient id="gFarBotH" gradientUnits="userSpaceOnUse" x1="1100" y1="0" x2="1590" y2="0">
    <stop offset="0" stop-color="#50a4ee" stop-opacity="0.75"/><stop offset="0.2" stop-color="#54aaf2" stop-opacity="0.55"/><stop offset="0.45" stop-color="#58b0f4" stop-opacity="0.25"/><stop offset="0.7" stop-color="#5ab4f2" stop-opacity="0"/><stop offset="1" stop-color="#5ab4f2" stop-opacity="0"/>
  </linearGradient>
  <!-- light green band above far bottom -->
  <linearGradient id="gLGreen" gradientUnits="userSpaceOnUse" x1="1400" y1="852" x2="1399" y2="892">
    <stop offset="0" stop-color="#9dbb8c"/><stop offset="0.5" stop-color="#a2c4a0"/><stop offset="0.85" stop-color="#a0c8b2"/><stop offset="1" stop-color="#8ec8d2"/>
  </linearGradient>
  <!-- right bottom band -->
  <linearGradient id="gRBot" gradientUnits="userSpaceOnUse" x1="1800" y1="871" x2="1805" y2="962">
    <stop offset="0" stop-color="#5cb2f4"/><stop offset="0.06" stop-color="#4190da"/><stop offset="0.2" stop-color="#4a9fe8"/><stop offset="0.32" stop-color="#58b4f4"/><stop offset="0.44" stop-color="#4a9ee6"/><stop offset="0.62" stop-color="#5cbcf8"/><stop offset="0.85" stop-color="#5cbefa"/><stop offset="0.96" stop-color="#4da4ee"/><stop offset="1" stop-color="#4494e0"/>
  </linearGradient>
  <!-- top face highlight -->
  <linearGradient id="gTopFace" gradientUnits="userSpaceOnUse" x1="1500" y1="322" x2="1497.6" y2="361">
    <stop offset="0" stop-color="#66bef5"/><stop offset="0.1" stop-color="#98e6fc"/><stop offset="0.26" stop-color="#e6fdff"/><stop offset="0.46" stop-color="#ffffff"/><stop offset="0.66" stop-color="#e2fcff"/><stop offset="0.86" stop-color="#b4f7ff"/><stop offset="1" stop-color="#a2f4fe"/>
  </linearGradient>
  <linearGradient id="gTopFaceH" gradientUnits="userSpaceOnUse" x1="1140" y1="0" x2="2000" y2="0">
    <stop offset="0" stop-color="#8feafd" stop-opacity="0.75"/><stop offset="0.14" stop-color="#96ecfd" stop-opacity="0.55"/><stop offset="0.28" stop-color="#a8f0fe" stop-opacity="0.2"/><stop offset="0.42" stop-color="#fff" stop-opacity="0"/><stop offset="1" stop-color="#fff" stop-opacity="0"/>
  </linearGradient>
  <!-- near wall fillet band -->
  <linearGradient id="gNearTop" gradientUnits="userSpaceOnUse" x1="1400" y1="354" x2="1395.5" y2="424">
    <stop offset="0" stop-color="#98f3fe"/><stop offset="0.3" stop-color="#8ceefe"/><stop offset="0.43" stop-color="#7ee2fc"/><stop offset="0.5" stop-color="#6ccdf9"/><stop offset="0.58" stop-color="#60bbf6"/><stop offset="0.75" stop-color="#5bb1f3"/><stop offset="0.95" stop-color="#58abf0"/><stop offset="1" stop-color="#56a9f0"/>
  </linearGradient>
  <!-- right face top band -->
  <linearGradient id="gRTop" gradientUnits="userSpaceOnUse" x1="1800" y1="356" x2="1795.5" y2="432">
    <stop offset="0" stop-color="#f0ffff"/><stop offset="0.08" stop-color="#c8fbff"/><stop offset="0.17" stop-color="#a4f6ff"/><stop offset="0.55" stop-color="#96f2fe"/><stop offset="0.62" stop-color="#86e8fd"/><stop offset="0.7" stop-color="#6ccffa"/><stop offset="0.8" stop-color="#62c2f8"/><stop offset="1" stop-color="#5cb8f5"/>
  </linearGradient>
</defs>

<!-- ===== silhouette base ===== -->
<path id="sil" fill="#55a6ec" d="M816.7,321.2 L1139.2,298.7 L1970,352.6 C1990,357 2012,378 2025.5,400.8 C2031,415 2033,430 2033,442.5 L2031.8,862.5 C2031,880 2027,905 2016,924 C2006,940 1990,950.5 1972.9,951.5 L1564,978.5 L1553,979 L1236.5,960.5 C1222,957 1205,951 1189,943.3 C1165,931 1145,915 1130.8,898.8 C1120,887 1110,872 1103,864 L774.7,429.6 C772.5,424 771.6,414 771.7,402.3 C771.9,388 774,373 778.6,359.3 C784,345 795,331 816.7,321.2 Z"/>

<!-- far wall top band (blue only) -->
<path fill="url(#gFarTop)" d="M816.7,321.2 L1207.6,343.6 C1215,360 1223,380 1229.1,402.3 L1233,410.1 L1260,449 L774.7,429.6 C772.5,424 771.6,414 771.7,402.3 C771.9,388 774,373 778.6,359.3 C784,345 795,331 816.7,321.2 Z"/>

<!-- dark strip -->
<path fill="#3e82bd" d="M774.7,429.6 L830.4,431.6 L1148.5,863 L1103,864.6 Z"/>

<!-- far bottom band (cyan) -->
<path fill="url(#gFarBot)" d="M1103,864 L1147.5,862.6 L1155.8,866.8 L1231,883.5 L1380,889.5 L1566.5,897 C1575.5,911.3 1581.5,924.8 1584.5,938.3 L1585.3,940.6 L1250,961.2 L1236.5,960.5 C1222,957 1205,951 1189,943.3 C1165,931 1145,915 1130.8,898.8 C1120,887 1110,872 1103,864 Z"/>

<linearGradient id="gWedge" gradientUnits="userSpaceOnUse" x1="1100" y1="0" x2="1350" y2="0"><stop offset="0" stop-color="#3e82bd"/><stop offset="0.6" stop-color="#3f84c0"/><stop offset="1" stop-color="#4a96d8"/></linearGradient>
<clipPath id="cSil"><use href="#sil"/></clipPath>
<path clip-path="url(#cSil)" fill="url(#gWedge)" d="M1095,864.9 L1147.5,862.6 L1155.8,866.8 L1231,883.5 L1345.7,888.6 C1330,888 1320,887.6 1305.9,888.6 C1270,891.6 1240,894 1212.9,894.8 L1125,898 Z"/>
<!-- green region -->
<path id="green" fill="url(#gGreen)" d="M818.6,404.2 L1141.2,388.6 C1152,392 1163,400 1176.3,417.9 L1190,439.4 L1476.2,849.6 L1497.3,878.2 L1566.5,896.2 L1380,889.5 L1231,883.5 L1155.8,866.8 L1147.5,862.6 L829.4,430.6 Z"/>
<path fill="url(#gGreenH)" style="mix-blend-mode:normal" d="M838,431.5 L1185,432 L1476.2,849.6 L1147.5,862.6 Z" opacity="0.35"/>
<!-- light green band at bottom -->
<path fill="url(#gLGreen)" d="M1147.5,862.6 L1476.2,849.6 L1497.3,878.2 L1566.5,896.2 L1566.5,897 L1380,889.5 L1231,883.5 L1155.8,866.8 Z"/>

<!-- yellow strip -->
<path fill="#bbc877" d="M1141.2,388.6 L1226,398 L1229.1,402.3 L1233,410.1 L1501.8,800 L1566.5,896.2 L1497.3,878.2 L1476.2,849.6 L1190,439.4 L1176.3,417.9 C1163,400 1152,392 1141.2,388.6 Z"/>
<path fill="#7d8e5e" d="M1141.2,388.6 L1226,398 L1229.1,402.3 L1233,410.1 L1234,413 L1172,409.5 C1163,400 1152,392 1141.2,388.6 Z"/>
<!-- yellow curl bottom -->
<path fill="#c3c970" d="M1476.2,849.6 L1535,848 L1566.5,896.2 L1497.3,878.2 Z"/>

<!-- near wall (left face) -->
<path fill="url(#gNear)" d="M1207.6,343.6 L1630,368 C1612,378 1596,392 1583,420 C1579,433 1577.5,442 1577.5,448 L1577.7,845.1 C1578,860 1580,872 1582.3,878.2 L1589,894.7 L1566.5,896.2 L1233,410.1 L1229.1,402.3 C1223,380 1215,360 1207.6,343.6 Z"/>
<path fill="url(#gNearTop)" d="M1207.6,343.6 L1630,368 C1612,378 1596,392 1583,420 L1581,427 L1236,414.5 L1233,410.1 L1229.1,402.3 C1223,380 1215,360 1207.6,343.6 Z"/>

<!-- right face -->
<path id="rface" fill="url(#gRight)" d="M1630,368 L1970,352.6 C1990,357 2012,378 2025.5,400.8 C2031,415 2033,430 2033,442.5 L2031.8,862.5 L1561.2,882 L1566.5,896.2 L1589,894.7 L1582.3,878.2 C1580,872 1578,860 1577.7,845.1 L1577.5,448 C1577.5,442 1579,433 1583,420 C1596,392 1612,378 1630,368 Z"/>
<path fill="url(#gRightH)" d="M1577.5,448 L2033,442.5 L2031.8,862.5 L1577.7,882 Z"/>
<path fill="url(#gRTop)" d="M1630,368 L1970,352.6 C1990,357 2012,378 2025.5,400.8 C2031,415 2033,430 2033,443.5 L1581,425.8 C1581.6,424 1582.2,422 1583,420 C1596,392 1612,378 1630,368 Z"/>

<!-- right bottom band -->
<path fill="url(#gRBot)" d="M1561.2,882 L2031.8,861.1 C2031,880 2027,905 2016,924 C2006,940 1990,950.5 1972.9,951.5 L1564,978.5 C1572.5,976.7 1580,971.4 1584.5,962.4 C1586,955 1586,946 1584.5,938.3 C1581.5,924.8 1575.5,911.3 1566.5,896.2 Z"/>

<!-- top face -->
<path fill="url(#gTopFace)" d="M1139.2,298.7 L1970,352.6 L1630,368 L1207.6,343.6 C1197,329 1182,314 1160.7,302.6 Z"/>
<path fill="url(#gTopFaceH)" d="M1139.2,298.7 L1970,352.6 L1630,368 L1207.6,343.6 C1197,329 1182,314 1160.7,302.6 Z"/>

<!-- white holes -->
<path fill="#fff" d="M818.6,321.9 L1128,300.3 Q1141,299 1154,302.2 C1168,306 1183,317 1195.9,330 C1200,335 1204,339 1206.6,343 Z"/>
<path fill="#fff" d="M1250,961.2 L1585.3,941.2 C1586,948 1586,956 1584.5,962.4 C1580,971.4 1572.5,976.7 1563.5,978.6 L1553,979 Z"/>

<!-- ===== edge lines ===== -->
<g fill="none" stroke="#4796e6" stroke-width="1.6" stroke-linejoin="round" stroke-linecap="round">
  <!-- outer silhouette -->
  <path d="M816.7,321.2 L1128,299.5 Q1139,298.4 1152,300.6 L1970,352.6 C1990,357 2012,378 2025.5,400.8 C2031,415 2033,430 2033,442.5"/>
  <path d="M816.7,321.2 C795,331 784,345 778.6,359.3 C774,373 771.9,388 771.7,402.3 C771.6,414 772.5,424 774.7,429.6"/>
  <!-- L2 -->
  <path d="M818.6,321.7 L1630,368 L1970,352.6"/>
  <!-- apex curve + D4 -->
  <path d="M1128,299.5 Q1141,298.2 1154,301.4 C1168,305.4 1183,316.4 1195.9,330 C1207.6,345.6 1217.4,364 1224.6,381 L1229.3,401 L1233.4,410.1" stroke-width="1.4"/>
  <!-- bottom line and curl -->
  <path d="M1236.5,960.5 L1553,979 C1563.5,978.6 1572.5,976.7 1580,971.4 C1584.5,962.4 1586,955 1585.7,950.4 C1584.5,938.3 1581.5,924.8 1566.5,896.2" stroke-width="1.5"/>
  <path d="M1250,961.2 L1585.3,940.6" stroke-width="1.5"/>
  <!-- right face left curve -->
  <path d="M1630,368 C1612,378 1596,392 1583,420 C1579,433 1577.5,442 1577.5,448" stroke="#4a98e2" stroke-width="1.2"/>
</g>
<!-- thin light lines -->
<g fill="none" stroke-linecap="round">
  <path d="M774.7,429.6 L1233,446.5" stroke="#6fb6f2" stroke-width="1.2"/>
  <path d="M1233,446.5 L1577,458.6" stroke="#b9d6c8" stroke-width="1.2"/>
  <path d="M1577.5,448 L1577.7,845.1 C1578,860 1580,872 1582.3,878.2 L1589,894.7" stroke="#a9d2c6" stroke-width="1.3"/>
  <path d="M1103,864 L1476.2,849.6" stroke="#78bdf2" stroke-width="1.2"/>
  <path d="M1476.2,849.6 L1577.7,845.1" stroke="#a9d2d6" stroke-width="1.2"/>
  <path d="M1250,958.5 L1584.5,938" stroke="#86c6f4" stroke-width="1"/>
  <path d="M1589,894.7 C1598,914.3 1614.6,927.8 1635.6,935.3 C1700,944 1850,948 1972.9,951.5" stroke="#5aaef0" stroke-width="1" opacity="0.8"/>
  <path d="M1561.2,882 L2031.8,861.1" stroke="#58aef2" stroke-width="1.6"/>
  <!-- D4 diag thin dark edge -->
  <path d="M1233,410.1 L1566.5,896.2" stroke="#4b93d8" stroke-width="1"/>
</g>
</svg>
<!--MODEL-END-->
</body>
</html>
